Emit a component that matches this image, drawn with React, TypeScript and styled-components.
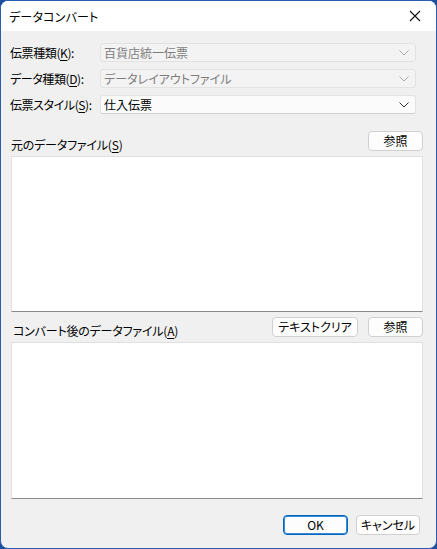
import React from "react";
import styled, { createGlobalStyle } from "styled-components";

const GlobalStyle = createGlobalStyle`
  html, body {
    margin: 0;
    padding: 0;
    background: #1d4e9e;
  }
  body {
    font-family: "Noto Sans CJK JP", "Liberation Sans", sans-serif;
    font-size: 12px;
    font-feature-settings: "palt";
    color: #000;
  }
`;

const Window = styled.div`
  width: 435px;
  height: 547px;
  border: 1px solid #2c5cb0;
  border-radius: 8px;
  overflow: hidden;
  background: #f0f0f0;
  display: flex;
  flex-direction: column;
`;

const TitleBar = styled.div`
  height: 30px;
  background: #fff;
  display: flex;
  align-items: center;
  justify-content: space-between;
  padding: 0 8px 0 8px;
  flex-shrink: 0;
`;

const Title = styled.span`
  font-size: 12px;
  letter-spacing: 0.2px;
`;

const CloseBtn = styled.div`
  width: 16px;
  height: 16px;
  display: flex;
  align-items: center;
  justify-content: center;
  margin-right: 5px;
`;

const Body = styled.div`
  flex: 1;
  display: flex;
  flex-direction: column;
  padding: 12px 13px 0 9px;
`;

const FormGrid = styled.div`
  display: grid;
  grid-template-columns: 90px 316px;
  row-gap: 7px;
`;

const Label = styled.div`
  height: 19px;
  line-height: 19px;
  white-space: nowrap;
  letter-spacing: -0.4px;
`;

const Combo = styled.div<{ $disabled?: boolean }>`
  height: 17px;
  border: 1px solid ${(p) => (p.$disabled ? "#e2e2e2" : "#e3e3e3")};
  border-bottom-color: ${(p) => (p.$disabled ? "#e2e2e2" : "#d0d0d0")};
  border-radius: 3px;
  background: ${(p) => (p.$disabled ? "#f3f3f3" : "#fbfbfb")};
  color: ${(p) => (p.$disabled ? "#7d7d7d" : "#000")};
  display: flex;
  align-items: center;
  justify-content: space-between;
  padding: 0 6px 0 3px;
  line-height: 17px;
`;

const Mn = styled.span`
  text-decoration: underline;
  text-underline-offset: 2px;
`;

const SectionHead = styled.div<{ $top: number }>`
  display: flex;
  align-items: flex-end;
  justify-content: space-between;
  margin-top: ${(p) => p.$top}px;
  height: 20px;
  padding-left: 1px;
`;

const SectionLabel = styled.div<{ $indent?: number }>`
  line-height: 16px;
  margin-bottom: -2px;
  padding-left: ${(p) => p.$indent ?? 0}px;
  letter-spacing: -0.2px;
`;

const ButtonGroup = styled.div`
  display: flex;
  gap: 10px;
`;

const Button = styled.button<{ $w: number; $primary?: boolean }>`
  width: ${(p) => p.$w}px;
  height: 20px;
  padding: 0;
  font-family: inherit;
  font-size: 12px;
  font-feature-settings: "palt";
  color: #000;
  background: #fdfdfd;
  border: 1px solid ${(p) => (p.$primary ? "#0067c0" : "#d0d0d0")};
  box-shadow: ${(p) => (p.$primary ? "inset 0 0 0 1px #3a8ad6" : "none")};
  border-radius: 4px;
  line-height: 18px;
`;

const TextBox = styled.div<{ $h: number }>`
  height: ${(p) => p.$h}px;
  margin-top: 5px;
  background: #fff;
  border: 1px solid #e0e0e0;
  border-bottom-color: #8a8a8a;
  box-sizing: border-box;
  width: 412px;
  margin-left: 1px;
`;

const Footer = styled.div`
  display: flex;
  justify-content: flex-end;
  gap: 8px;
  margin-top: 16px;
  padding-right: 3px;
`;

const Chevron = ({ color }: { color: string }) => (
  <svg width="10" height="6" viewBox="0 0 10 6">
    <path d="M0.5 0.5 L5 5 L9.5 0.5" fill="none" stroke={color} strokeWidth="1" />
  </svg>
);

export default function App() {
  return (
    <>
      <GlobalStyle />
      <Window>
        <TitleBar>
          <Title>データコンバート</Title>
          <CloseBtn>
            <svg width="12" height="12" viewBox="0 0 12 12">
              <path d="M1 1 L11 11 M11 1 L1 11" stroke="#111" strokeWidth="1.1" />
            </svg>
          </CloseBtn>
        </TitleBar>
        <Body>
          <FormGrid>
            <Label>
              伝票種類(<Mn>K</Mn>):
            </Label>
            <Combo $disabled>
              <span>百貨店統一伝票</span>
              <Chevron color="#a8a8a8" />
            </Combo>
            <Label>
              データ種類(<Mn>D</Mn>):
            </Label>
            <Combo $disabled>
              <span>データレイアウトファイル</span>
              <Chevron color="#a8a8a8" />
            </Combo>
            <Label>
              伝票スタイル(<Mn>S</Mn>):
            </Label>
            <Combo>
              <span>仕入伝票</span>
              <Chevron color="#333" />
            </Combo>
          </FormGrid>

          <SectionHead $top={17}>
            <SectionLabel>
              元のデータファイル(<Mn>S</Mn>)
            </SectionLabel>
            <Button $w={55}>参照</Button>
          </SectionHead>
          <TextBox $h={156} />

          <SectionHead $top={5}>
            <SectionLabel $indent={2}>
              コンバート後のデータファイル(<Mn>A</Mn>)
            </SectionLabel>
            <ButtonGroup>
              <Button $w={86}>テキストクリア</Button>
              <Button $w={55}>参照</Button>
            </ButtonGroup>
          </SectionHead>
          <TextBox $h={157} />

          <Footer>
            <Button $w={65} $primary>
              OK
            </Button>
            <Button $w={64}>キャンセル</Button>
          </Footer>
        </Body>
      </Window>
    </>
  );
}
